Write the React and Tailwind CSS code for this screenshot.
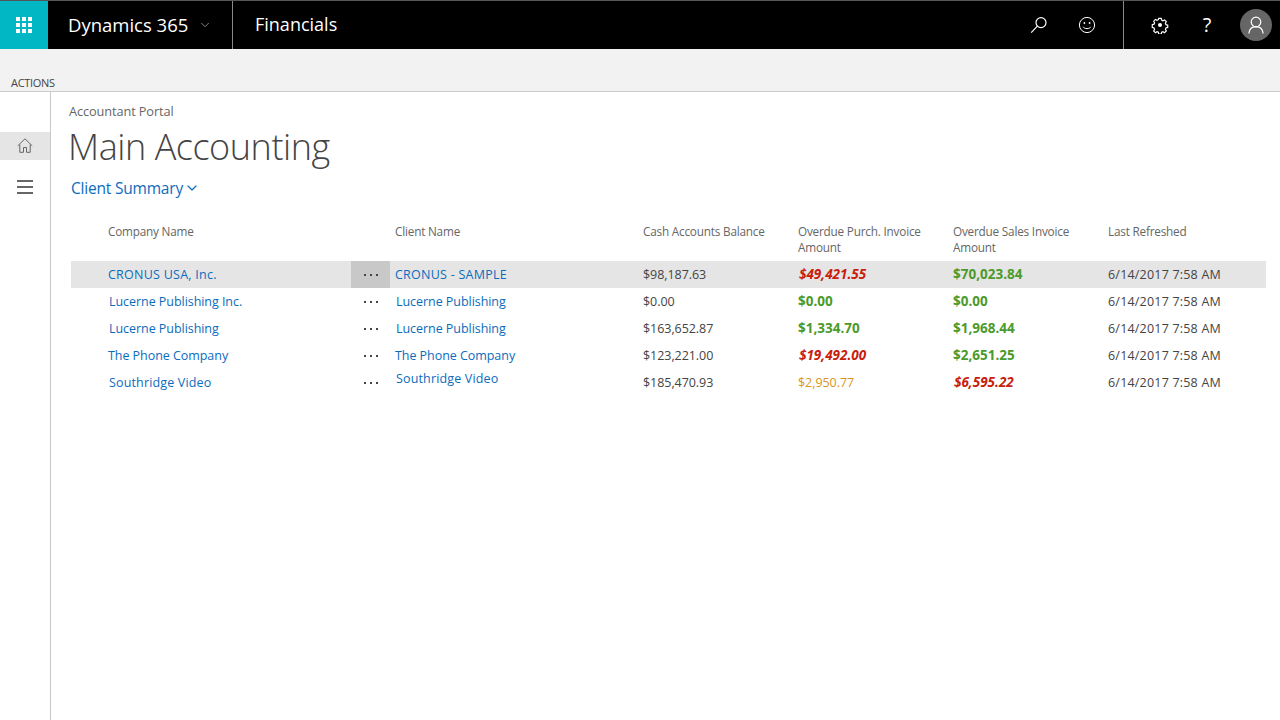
import React from "react";
import { ChevronDown } from "lucide-react";

const rows = [
  { company: "CRONUS USA, Inc.", client: "CRONUS - SAMPLE", cash: "$98,187.63", purch: "$49,421.55", purchTone: "bad", sales: "$70,023.84", salesTone: "good", selected: true },
  { company: "Lucerne Publishing Inc.", client: "Lucerne Publishing", cash: "$0.00", purch: "$0.00", purchTone: "good", sales: "$0.00", salesTone: "good", nudge: true },
  { company: "Lucerne Publishing", client: "Lucerne Publishing", cash: "$163,652.87", purch: "$1,334.70", purchTone: "good", sales: "$1,968.44", salesTone: "good", nudge: true },
  { company: "The Phone Company", client: "The Phone Company", cash: "$123,221.00", purch: "$19,492.00", purchTone: "bad", sales: "$2,651.25", salesTone: "good" },
  { company: "Southridge Video", client: "Southridge Video", cash: "$185,470.93", purch: "$2,950.77", purchTone: "warn", sales: "$6,595.22", salesTone: "bad", nudge: true, lift: true },
];

const tones = {
  good: "text-[13.5px] tracking-normal font-bold text-[#4c9a2a]",
  bad: "text-[13.5px] tracking-normal font-bold italic text-[#c8200c] pl-px",
  warn: "pt-[2px] text-[#d9931e]",
};

function Waffle() {
  return (
    <div className="grid grid-cols-3 gap-[2px]">
      {[...Array(9)].map((_, i) => (
        <span key={i} className="h-[4px] w-[4px] bg-white" />
      ))}
    </div>
  );
}

function TopIcons() {
  return (
    <div className="ml-auto flex h-full items-center">
      <button className="flex h-12 w-12 items-center justify-center">
        <svg width="18" height="18" viewBox="0 0 18 18" fill="none" stroke="white" strokeWidth="1.2">
          <circle cx="11" cy="6.6" r="5" />
          <path d="M7.4 10.2 1.2 16.6" />
        </svg>
      </button>
      <button className="flex h-12 w-12 items-center justify-center">
        <svg width="18" height="18" viewBox="0 0 18 18" fill="none" stroke="white" strokeWidth="1">
          <circle cx="9" cy="9" r="7.6" />
          <circle cx="6.4" cy="7" r=".6" fill="white" />
          <circle cx="11.6" cy="7" r=".6" fill="white" />
          <path d="M5.2 10.8c1 2.4 6.6 2.4 7.6 0" />
        </svg>
      </button>
      <div className="ml-[12px] flex h-full items-center border-l border-[#8a8a8a]">
        <button className="ml-[12px] flex h-12 w-12 items-center justify-center">
          <svg width="18" height="18" viewBox="0 0 18 18" fill="none" stroke="white" strokeWidth="1.3">
            <circle cx="9" cy="9" r="2" fill="white" stroke="none" />
            <path d="M7.6 1.6h2.8l.4 2 1.5.7 1.8-1 1.9 2-1 1.7.6 1.6 2 .5v2.6l-2 .5-.6 1.6 1 1.7-1.9 2-1.8-1-1.5.6-.4 2H7.6l-.4-2-1.5-.6-1.8 1-1.9-2 1-1.7-.6-1.6-2-.5V8.600l2-.5.6-1.6-1-1.700 1.900-2 1.800 1 1.500-.7z" transform="translate(.9 .9) scale(.9)" />
          </svg>
        </button>
        <button className="flex h-12 w-[46px] items-center justify-center text-[20px] text-white">?</button>
        <div className="ml-[10px] mr-[8px] flex h-8 w-8 items-center justify-center rounded-full bg-[#666666]">
          <svg width="20" height="20" viewBox="0 0 20 20" fill="none" stroke="white" strokeWidth="1.2">
            <circle cx="10" cy="7" r="4.8" />
            <path d="M2.800 18.500c.6-4.400 3.400-6.800 7.200-6.800s6.600 2.400 7.200 6.800" />
          </svg>
        </div>
      </div>
    </div>
  );
}

function TableRow({ row }) {
  const cellH = "flex h-[27px] items-center";
  const linkTrack = row.selected ? "tracking-[0.25px]" : row.lift ? "tracking-[0.15px]" : "";
  return (
    <div className={`grid grid-cols-[37px_243px_39px_253px_155px_155px_155px_1fr] ${row.selected ? "bg-[#e5e5e5]" : ""}`}>
      <div />
      <div className={`${cellH} pt-[2px] text-[#0b6cbd] ${linkTrack} ${row.nudge ? "pl-px" : ""}`}>{row.company}</div>
      <div className={`${cellH} justify-center ${row.selected ? "bg-[#c8c8c8]" : ""}`}>
        <div className="flex gap-[4px] pt-px">
          <span className="h-[2px] w-[2px] bg-[#444444]" />
          <span className="h-[2px] w-[2px] bg-[#444444]" />
          <span className="h-[2px] w-[2px] bg-[#444444]" />
        </div>
      </div>
      <div className={`${cellH} text-[#0b6cbd] ${linkTrack} ${row.nudge ? "pl-[6px]" : "pl-[5px]"} ${row.lift ? "pb-[6px]" : "pt-[2px]"}`}>{row.client}</div>
      <div className={`${cellH} pt-[2px] text-[#444444]`}>{row.cash}</div>
      <div className={`${cellH} ${tones[row.purchTone]}`}>{row.purch}</div>
      <div className={`${cellH} ${tones[row.salesTone]}`}>{row.sales}</div>
      <div className={`${cellH} pt-[2px] text-[#444444] tracking-[0.2px]`}>6/14/2017 7:58 AM</div>
    </div>
  );
}

export default function App() {
  return (
    <div className="flex h-[720px] flex-col overflow-hidden bg-white font-['Open_Sans','Noto_Sans',sans-serif]">
      {/* top bar */}
      <header className="flex h-[49px] shrink-0 items-center border-t border-[#555555] bg-black text-white">
        <div className="flex h-full w-12 items-center justify-center bg-[#00b7c3]">
          <Waffle />
        </div>
        <div className="flex h-full w-[185px] items-center border-r border-[#8a8a8a] pl-[20px]">
          <span className="text-[18.5px] tracking-normal">Dynamics 365</span>
          <ChevronDown className="ml-[10px] text-[#aaaaaa]" size={14} strokeWidth={1.3} />
        </div>
        <span className="pb-[2px] pl-[22px] text-[18px] tracking-normal">Financials</span>
        <TopIcons />
      </header>

      {/* ribbon */}
      <div className="flex h-[43px] shrink-0 items-end border-b border-[#c8cdd0] bg-[#f2f2f2] pl-[11px] text-[11px] tracking-[-0.3px] text-[#444444]">
        ACTIONS
      </div>

      <div className="flex min-h-0 flex-1">
        {/* side nav */}
        <aside className="w-[51px] shrink-0 border-r border-[#c8c8c8] pt-[40px]">
          <div className="flex h-[28px] items-center justify-center bg-[#e5e5e5] pb-[2px]">
            <svg width="16" height="15" viewBox="0 0 16 15" fill="none" stroke="#666666" strokeWidth="1">
              <path d="M.8 7.800 8 .8l7.200 7M2.800 6.500v7.800h3.700V9.500h3v4.800h3.700V6.500" />
            </svg>
          </div>
          <div className="mt-[20px] flex flex-col items-center gap-[4px]">
            <span className="h-[2px] w-4 bg-[#666666]" />
            <span className="h-[2px] w-4 bg-[#666666]" />
            <span className="h-[2px] w-4 bg-[#666666]" />
          </div>
        </aside>

        {/* content */}
        <main className="min-w-0 flex-1">
          <div className="pl-[18px] pt-[10px] text-[12.75px] leading-[18px] tracking-[-0.1px] text-[#666666]">Accountant Portal</div>
          <h1 className="pl-[17px] pt-[3px] text-[36px] font-light leading-[48px] tracking-[-0.45px] text-[#444444]">Main Accounting</h1>
          <div className="flex items-center pl-[20px] pt-[7px] text-[15.5px] leading-[20px] tracking-[-0.2px] text-[#0b6cbd]">
            Client Summary
            <ChevronDown className="ml-[1px]" size={16} strokeWidth={1.8} />
          </div>

          <div className="ml-[20px] mr-[14px] mt-[19px] text-[12.5px] tracking-[-0.05px]">
            <div className="grid h-[44px] grid-cols-[37px_243px_39px_253px_155px_155px_155px_1fr] pt-[6px] text-[11.75px] leading-[16px] tracking-[-0.2px] text-[#666666]">
              <div />
              <div>Company Name</div>
              <div />
              <div className="pl-[5px]">Client Name</div>
              <div>Cash Accounts Balance</div>
              <div>Overdue Purch. Invoice<br />Amount</div>
              <div>Overdue Sales Invoice<br />Amount</div>
              <div>Last Refreshed</div>
            </div>
            {rows.map((row, i) => (
              <TableRow key={i} row={row} />
            ))}
          </div>
        </main>
      </div>
    </div>
  );
}
